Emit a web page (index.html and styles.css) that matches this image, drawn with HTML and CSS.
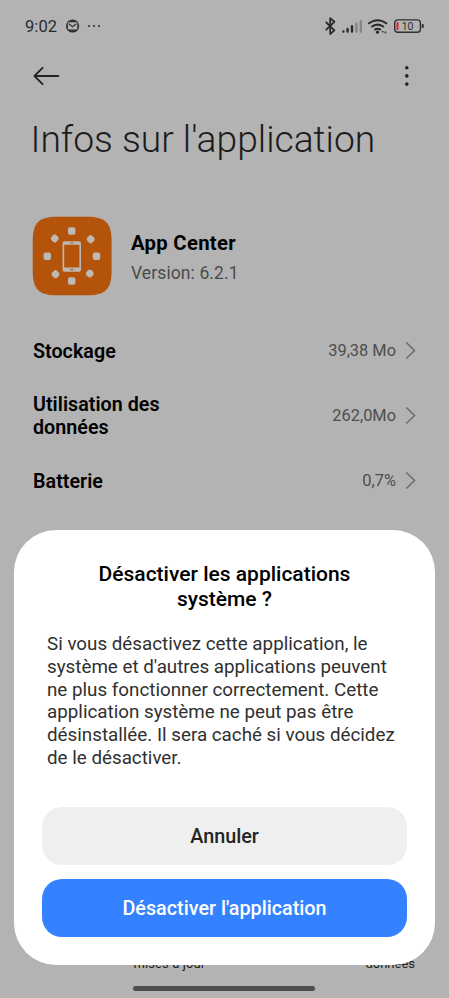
FILE: index.html
```html
<!DOCTYPE html>
<html lang="fr">
<head>
<meta charset="utf-8">
<title>Infos sur l'application</title>
<link rel="stylesheet" href="styles.css">
</head>
<body>
<main class="screen">
  <header class="status">
    <span class="clock">9:02</span>
    <svg class="mail" width="14" height="14" viewBox="0 0 14 14"><circle cx="6.6" cy="7" r="6.6" fill="#303030"/><rect x="1.9" y="3.2" width="9.4" height="7.2" rx="1.2" fill="#b3b3b3"/><path d="M2.8 4.8 6.6 7.8l3.8-3" fill="none" stroke="#303030" stroke-width="1.1"/></svg>
    <svg class="dots" width="14" height="4" viewBox="0 0 14 4" fill="#303030"><circle cx="2" cy="2" r="1.1"/><circle cx="7" cy="2" r="1.1"/><circle cx="12" cy="2" r="1.1"/></svg>
    <svg class="tray" width="104" height="20" viewBox="322 16 104 20">
      <path d="m325.8 22 8.6 8.4-4.2 3.6V18.2l4.2 3.6-8.6 8.4" fill="none" stroke="#2b2b2b" stroke-width="1.8" stroke-linejoin="round"/>
      <g stroke-width="2.4" stroke-linecap="round"><path d="M343.4 31.4v.1M347.6 29v2.6M352 26.3v5.3" stroke="#2b2b2b"/><path d="M356.4 23.8v7.8M360.8 21.2v10.4" stroke="#858585"/></g>
      <g fill="none" stroke="#2b2b2b" stroke-width="2"><path d="M368.2 23.8Q377.6 16.6 387 23.8M371.3 27q6.3-4.8 12.6 0M374.3 30q3.3-2.4 6.6 0"/></g>
      <circle cx="377.5" cy="32.2" r="1.6" fill="#2b2b2b"/><path d="m381.5 31 1.2 2.3 1-2.3zM384.2 33.3l1.2-2.6 1.2 2.6z" fill="#3a3a3a"/>
      <rect x="394.7" y="19.9" width="25.7" height="12.4" rx="3.2" fill="none" stroke="#303030" stroke-width="1.4"/><rect x="396.5" y="22" width="2" height="8" rx=".7" fill="#d9262c"/><rect x="421.7" y="24" width="2" height="4" rx=".8" fill="#303030"/>
      <text class="charge" x="401.7" y="29.9">10</text>
    </svg>
  </header>
  <nav class="bar">
    <svg width="28" height="20" viewBox="0 0 28 20" fill="none" stroke="#222" stroke-width="1.8" stroke-linecap="round" stroke-linejoin="round"><path d="M10.6 1.8 2.4 10l8.2 8.2M2.4 10h24"/></svg>
    <svg width="6" height="22" viewBox="0 0 6 22" fill="#222"><circle cx="2.8" cy="2.7" r="1.8"/><circle cx="2.8" cy="10.9" r="1.8"/><circle cx="2.8" cy="19.1" r="1.8"/></svg>
  </nav>
  <h1 class="title">Infos sur l'application</h1>
  <section class="app">
    <svg width="80" height="80" viewBox="0 0 80 80">
      <path d="M.7 25C.7 6.5 7 .7 25 .7h30c18 0 24.6 5.8 24.6 24.3v30c0 18.5-6.6 24.3-24.6 24.3H25C7 79.3.7 73.5.7 55z" fill="#b4540b"/>
      <g fill="#bdb9b5"><rect x="36" y="11.3" width="7.4" height="7.4" rx="2"/><rect x="36" y="61.3" width="7.4" height="7.4" rx="2"/><rect x="11.6" y="36.6" width="7.4" height="7.4" rx="2"/><rect x="60.8" y="36.6" width="7.4" height="7.4" rx="2"/>
      <rect x="19.3" y="18.9" width="7" height="7" rx="2.4" transform="rotate(45 22.8 22.4)"/><rect x="55.2" y="19.7" width="7" height="7" rx="2.4" transform="rotate(45 58.7 23.2)"/><rect x="20" y="54.7" width="7" height="7" rx="2.4" transform="rotate(45 23.5 58.2)"/><rect x="54.3" y="54" width="7" height="7" rx="2.4" transform="rotate(45 57.8 57.5)"/>
      <path fill-rule="evenodd" d="M32.6 25.2H47a2 2 0 0 1 2 2v26.5a2 2 0 0 1-2 2H32.6a2 2 0 0 1-2-2V27.2a2 2 0 0 1 2-2zm-.4 3.6v22.8h15.2V28.8z"/></g>
      <path d="M38.3 27h3M38.3 53.6h3" stroke="#b4540b" stroke-width="1.2"/>
    </svg>
    <div><h2 class="app-name">App Center</h2><p class="version">Version: 6.2.1</p></div>
  </section>
  <ul class="rows">
    <li class="row"><span class="label">Stockage</span><span class="value">39,38 Mo</span><svg class="chev" width="11" height="18" viewBox="0 0 11 18"><path d="m1.3 .5 8.2 8-8.2 8"/></svg></li>
    <li class="row"><span class="label">Utilisation des données</span><span class="value">262,0Mo</span><svg class="chev" width="11" height="18" viewBox="0 0 11 18"><path d="m1.3 .5 8.2 8-8.2 8"/></svg></li>
    <li class="row"><span class="label">Batterie</span><span class="value">0,7%</span><svg class="chev" width="11" height="18" viewBox="0 0 11 18"><path d="m1.3 .5 8.2 8-8.2 8"/></svg></li>
  </ul>
  <footer class="actions"><span class="updates">mises à jour</span><span class="data">données</span></footer>
  <div class="home"></div>
  <section class="dialog">
    <h2 class="dialog-title">Désactiver les applications<br>système ?</h2>
    <p class="message">Si vous désactivez cette application, le<br>système et d'autres applications peuvent<br>ne plus fonctionner correctement. Cette<br>application système ne peut pas être<br>désinstallée. Il sera caché si vous décidez<br>de le désactiver.</p>
    <button class="btn">Annuler</button>
    <button class="btn primary">Désactiver l'application</button>
  </section>
</main>
</body>
</html>
```
FILE: styles.css
```css
* { box-sizing: border-box; margin: 0; padding: 0; }
body { background: #b3b3b3; font-family: Roboto, sans-serif; }
.screen { position: relative; display: flex; flex-direction: column; width: 449px; height: 998px; overflow: hidden; background: #b3b3b3; color: #000; }
.status { display: flex; align-items: center; height: 52px; padding: 0 23px 0 25px; flex: none; }
.clock { width: 41px; padding-top: 1px; font-size: 16.5px; letter-spacing: .1px; color: #2b2b2b; white-space: nowrap; }
.dots { margin-left: 7px; }
.tray { margin-left: auto; }
.charge { font-size: 10.5px; fill: #303030; }
.bar { display: flex; align-items: center; justify-content: space-between; height: 48px; padding: 0 39px 0 32px; flex: none; }
.title { height: 80px; padding-left: 30.5px; font-size: 37.2px; font-weight: 300; line-height: 78px; color: #1c1c1c; white-space: nowrap; flex: none; }
.app { display: flex; align-items: center; gap: 19px; height: 80px; margin: 36px 0 0 32px; flex: none; }
.app-name { padding-top: 2px; font-size: 20.3px; font-weight: 700; line-height: 28px; letter-spacing: .3px; }
.version { margin-top: 3px; font-size: 17.5px; line-height: 26px; color: #4b4b4b; letter-spacing: .1px; }
.rows { list-style: none; margin-top: 22px; padding: 0 33px; }
.row { display: flex; align-items: center; height: 65px; }
.label { width: 150px; padding-top: 1px; font-size: 19.7px; font-weight: 600; line-height: 23px; letter-spacing: .03px; }
.value { margin-left: auto; font-size: 16.4px; color: #4d4d4d; }
.chev { margin-left: 9px; fill: none; stroke: #6b6b6b; stroke-width: 1.5; }
.actions { display: flex; justify-content: space-between; margin-top: auto; padding: 0 34px 0 133.5px; font-size: 13px; line-height: 16px; color: #1c1c1c; }
.updates { letter-spacing: .1px; }
.home { width: 182px; height: 5px; margin: 14px 0 7px 133px; border-radius: 3px; background: #4c4e4d; flex: none; }
.dialog { position: absolute; left: 14px; top: 530px; width: 421px; height: 435px; padding: 32px 28px 28px; border-radius: 42px; background: #fff; display: flex; flex-direction: column; }
.dialog-title { font-size: 21px; font-weight: 500; line-height: 24.5px; text-align: center; white-space: nowrap; }
.message { margin: 22px 0 auto 5px; font-size: 18.8px; line-height: 22.8px; color: #303030; white-space: nowrap; }
.btn { height: 58px; padding-top: 2px; border: 0; border-radius: 20px; background: #efefef; color: #242424; font: 500 19.8px/56px Roboto, sans-serif; }
.primary { margin-top: 14px; background: #3482ff; color: #fff; }
```
